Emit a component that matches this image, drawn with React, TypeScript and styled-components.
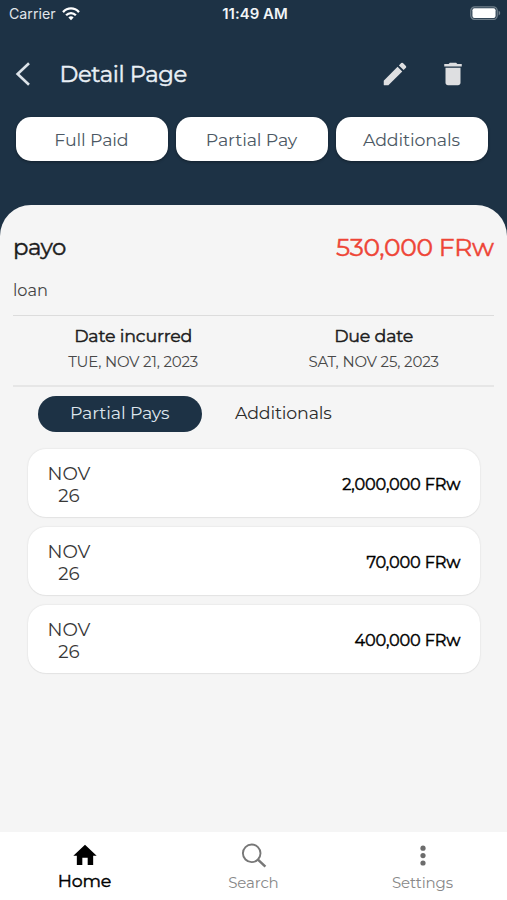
import React from "react";
import styled, { createGlobalStyle } from "styled-components";

const Global = createGlobalStyle`
  *, *::before, *::after { box-sizing: border-box; }
  body { margin: 0; background: #f5f5f5; font-family: Montserrat, Inter, "Open Sans", sans-serif; }
  button { font-family: inherit; border: 0; padding: 0; background: none; }
  svg { display: block; flex: none; }
`;

const Label = styled.span<{ $size: number; $space?: number; $bold?: boolean; $color?: string; $line?: number }>`
  display: block;
  white-space: nowrap;
  font-size: ${(p) => p.$size}px;
  font-weight: 400;
  -webkit-text-stroke: ${(p) => (p.$bold ? "0.45px currentColor" : "0")};
  letter-spacing: ${(p) => p.$space ?? 0}px;
  margin-right: ${(p) => -(p.$space ?? 0)}px;
  line-height: ${(p) => p.$line ?? 22}px;
  color: ${(p) => p.$color ?? "#333"};
`;

const SystemText = styled.span<{ $strong?: boolean }>`
  font-family: Inter, sans-serif;
  font-size: ${(p) => (p.$strong ? 14.9 : 14.2)}px;
  font-weight: ${(p) => (p.$strong ? 600 : 400)};
  letter-spacing: ${(p) => (p.$strong ? 0.05 : 0)}px;
  line-height: 22px;
  color: ${(p) => (p.$strong ? "#f2f5f7" : "#e1e6ea")};
`;

const Screen = styled.div`
  width: 100%;
  height: 900px;
  display: flex;
  flex-direction: column;
  background: #1d3245;
  overflow: hidden;
`;

const StatusBar = styled.div`
  height: 28px;
  display: grid;
  grid-template-columns: 1fr auto 1fr;
  align-items: center;
  padding: 0 6px 0 9px;
`;

const Carrier = styled.div`
  display: flex;
  align-items: center;
  gap: 6px;
`;

const BatterySlot = styled.div`
  display: flex;
  justify-content: flex-end;
  padding-bottom: 2px;
`;

const Header = styled.header`
  height: 46px;
  margin-top: 23px;
  padding: 0 39px 0 15px;
  display: flex;
  align-items: center;
`;

const Title = styled.h1`
  margin: 0 auto 0 27.5px;
`;

const IconButton = styled.button`
  display: flex;
  margin-left: 28px;
`;

const BackButton = styled.button`
  display: flex;
`;

const Actions = styled.div`
  display: grid;
  grid-template-columns: repeat(3, 152px);
  gap: 8px;
  margin: 20px 0 44px 15.5px;
`;

const ActionButton = styled.button`
  height: 44px;
  padding-top: 2px;
  border-radius: 15px;
  background: #fff;
  box-shadow: 0 1px 3px rgba(0, 0, 0, 0.35);
  display: flex;
  align-items: center;
  justify-content: center;
`;

const Panel = styled.main`
  flex: 1;
  background: #f5f5f5;
  border-radius: 31px 31px 0 0;
  padding: 30px 13px 0;
`;

const Summary = styled.section`
  display: flex;
  justify-content: space-between;
  height: 44px;
`;

const Note = styled.div`
  height: 36px;
`;

const Dates = styled.section`
  display: grid;
  grid-template-columns: 1fr 1fr;
  justify-items: center;
  height: 72px;
  padding-top: 9px;
  border-top: 1px solid #dcdcdc;
  border-bottom: 2px solid #e6e6e6;
`;

const DateBlock = styled.div`
  display: flex;
  flex-direction: column;
  align-items: center;
  gap: 3.5px;
`;

const Tabs = styled.div`
  display: flex;
  gap: 33px;
  padding: 9px 0 0 24.5px;
`;

const Tab = styled.button<{ $active?: boolean }>`
  height: 36px;
  padding-bottom: 2px;
  width: ${(p) => (p.$active ? "164.5px" : "auto")};
  border-radius: 18px;
  background: ${(p) => (p.$active ? "#1d3245" : "transparent")};
  display: flex;
  align-items: center;
  justify-content: center;
`;

const Payments = styled.section`
  display: flex;
  flex-direction: column;
  gap: 10px;
  padding: 17px 14px 0 15px;
`;

const PaymentCard = styled.article`
  height: 68px;
  border-radius: 18px;
  background: #fff;
  box-shadow: 0 0 2px rgba(0, 0, 0, 0.13), 0 1px 1px rgba(0, 0, 0, 0.04);
  display: flex;
  align-items: center;
  justify-content: space-between;
  padding: 2px 19.5px 0 19.5px;
`;

const Day = styled.div`
  display: flex;
  flex-direction: column;
  align-items: center;
  padding-top: 2px;
`;

const Navigation = styled.nav`
  height: 68px;
  background: #fff;
  display: grid;
  grid-template-columns: repeat(3, 1fr);
`;

const NavItem = styled.div`
  display: flex;
  flex-direction: column;
  align-items: center;
  padding-top: 9px;
`;

const NavLabel = styled.div<{ $active?: boolean }>`
  margin-top: ${(p) => (p.$active ? 1 : 3)}px;
`;

const WifiIcon = () => (
  <svg width="18" height="14" viewBox="0 0 18 14" fill="none" stroke="#fff" strokeWidth="2.3">
    <path d="M1 5.1C5.6 .2 12.4 .2 17 5.1" />
    <path d="M4.1 8.3c2.8-2.9 7-2.9 9.8 0" />
    <path d="M6.4 10.5c1.5-1.6 3.7-1.6 5.2 0L9 13.2z" fill="#fff" stroke="none" />
  </svg>
);

const BatteryIcon = () => (
  <svg width="31" height="14" viewBox="0 0 31 14">
    <rect x=".8" y=".8" width="26.4" height="12.6" rx="4" fill="none" stroke="#71808c" strokeWidth="1.3" />
    <rect x="2.4" y="2.3" width="23.2" height="9.6" rx="2" fill="#fff" />
    <path d="M28.6 4.7c2.1.7 2.1 4 0 4.7z" fill="#71808c" />
  </svg>
);

const BackIcon = () => (
  <svg width="17" height="26" viewBox="0 0 17 26" fill="none" stroke="#dce3e9" strokeWidth="2.6">
    <path d="M14 2.2 2.6 13 14 23.8" />
  </svg>
);

const EditIcon = () => (
  <svg width="30" height="30" viewBox="0 0 24 24" fill="#dedfe1">
    <path d="M3 17.46v3.04c0 .28.22.5.5.5h3.04c.13 0 .26-.05.35-.15L17.81 9.94l-3.75-3.75L3.15 17.1c-.1.1-.15.22-.15.36zM20.71 7.04a.996.996 0 0 0 0-1.41l-2.34-2.34a.996.996 0 0 0-1.41 0l-1.83 1.83 3.75 3.75 1.83-1.83z" />
  </svg>
);

const DeleteIcon = () => (
  <svg width="30" height="30" viewBox="0 0 24 24" fill="#dedfe1">
    <path d="M6 19c0 1.1.9 2 2 2h8c1.1 0 2-.9 2-2V7H6v12zM19 4h-3.5l-1-1h-5l-1 1H5v2h14V4z" />
  </svg>
);

const HomeIcon = () => (
  <svg width="28" height="28" viewBox="0 0 24 24" fill="#000">
    <path d="M9.7 20.6v-6.3h4.6v6.3H19v-8h3L12 3.2 2 12.6h3v8z" />
  </svg>
);

const SearchIcon = () => (
  <svg width="28" height="28" viewBox="0 0 28 28" fill="none" stroke="#777">
    <circle cx="11.7" cy="12.3" r="8.8" strokeWidth="1.9" />
    <path d="m18.2 18.8 7.2 6.9" strokeWidth="2.5" />
  </svg>
);

const MoreIcon = () => (
  <svg width="28" height="28" viewBox="0 0 28 28" fill="#6c6c6c">
    <circle cx="14" cy="7.2" r="2.6" />
    <circle cx="14" cy="14.6" r="2.6" />
    <circle cx="14" cy="22" r="2.6" />
  </svg>
);

const payments = ["2,000,000 FRw", "70,000 FRw", "400,000 FRw"];

export default function App() {
  return (
    <Screen>
      <Global />
      <StatusBar>
        <Carrier>
          <SystemText>Carrier</SystemText>
          <WifiIcon />
        </Carrier>
        <SystemText $strong>11:49 AM</SystemText>
        <BatterySlot><BatteryIcon /></BatterySlot>
      </StatusBar>

      <Header>
        <BackButton aria-label="Back"><BackIcon /></BackButton>
        <Title><Label $size={22.8} $bold $space={-0.42} $color="#eaf0f6" $line={30}>Detail Page</Label></Title>
        <IconButton aria-label="Edit"><EditIcon /></IconButton>
        <IconButton aria-label="Delete"><DeleteIcon /></IconButton>
      </Header>

      <Actions>
        <ActionButton><Label $size={17.4} $space={-0.12} $color="#4c5864">Full Paid</Label></ActionButton>
        <ActionButton><Label $size={17.4} $space={-0.12} $color="#4c5864">Partial Pay</Label></ActionButton>
        <ActionButton><Label $size={17.4} $space={-0.12} $color="#4c5864">Additionals</Label></ActionButton>
      </Actions>

      <Panel>
        <Summary>
          <Label $size={22.8} $bold $space={-0.45} $color="#1c1c1c" $line={24}>payo</Label>
          <Label $size={25} $bold $space={-0.35} $color="#ee4537" $line={24}>530,000 FRw</Label>
        </Summary>
        <Note><Label $size={16.2} $color="#444">loan</Label></Note>

        <Dates>
          <DateBlock>
            <Label $size={17.4} $bold $space={-0.17} $color="#1c1c1c">Date incurred</Label>
            <Label $size={15} $space={-0.18} $color="#484848">TUE, NOV 21, 2023</Label>
          </DateBlock>
          <DateBlock>
            <Label $size={17.4} $bold $space={-0.17} $color="#1c1c1c">Due date</Label>
            <Label $size={15} $space={-0.16} $color="#484848">SAT, NOV 25, 2023</Label>
          </DateBlock>
        </Dates>

        <Tabs>
          <Tab $active><Label $size={17.4} $space={-0.12} $color="#dde6ee">Partial Pays</Label></Tab>
          <Tab><Label $size={17.4} $space={-0.15} $color="#2c2c2c">Additionals</Label></Tab>
        </Tabs>

        <Payments>
          {payments.map((amount) => (
            <PaymentCard key={amount}>
              <Day>
                <Label $size={18.4} $color="#383838">NOV</Label>
                <Label $size={18.2} $color="#383838">26</Label>
              </Day>
              <Label $size={16.2} $bold $space={-0.17} $color="#000">{amount}</Label>
            </PaymentCard>
          ))}
        </Payments>
      </Panel>

      <Navigation>
        <NavItem>
          <HomeIcon />
          <NavLabel $active><Label $size={17.4} $bold $space={-0.1} $color="#000">Home</Label></NavLabel>
        </NavItem>
        <NavItem>
          <SearchIcon />
          <NavLabel><Label $size={15} $space={-0.15} $color="#888">Search</Label></NavLabel>
        </NavItem>
        <NavItem>
          <MoreIcon />
          <NavLabel><Label $size={15} $space={-0.15} $color="#888">Settings</Label></NavLabel>
        </NavItem>
      </Navigation>
    </Screen>
  );
}
